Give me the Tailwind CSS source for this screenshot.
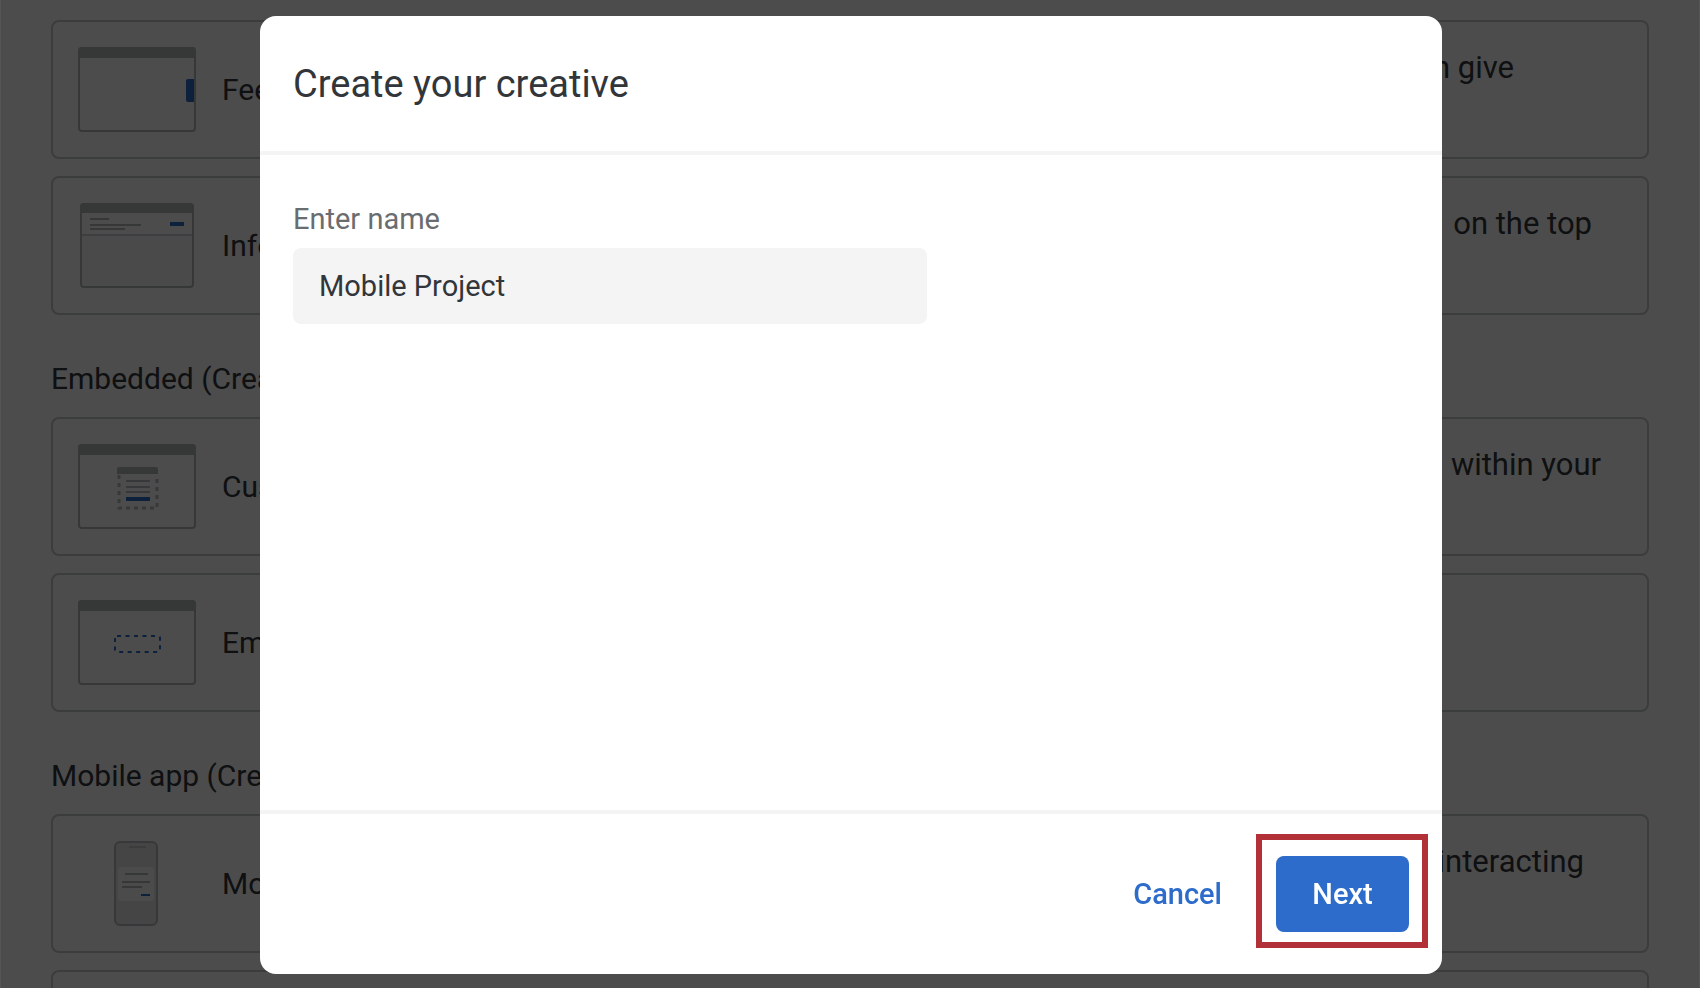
<!DOCTYPE html>
<html lang="en">
<head>
<meta charset="utf-8">
<meta name="viewport" content="width=device-width, initial-scale=1">
<title>Create your creative</title>
<script src="https://cdn.jsdelivr.net/npm/@tailwindcss/browser@4"></script>
</head>
<body class="h-screen overflow-hidden bg-white font-['Roboto',sans-serif] text-[29px] leading-[42px] text-[#32363a]">

<main class="flex h-screen flex-col gap-[43px] overflow-hidden px-[51px] pt-5" inert>
  <section class="flex shrink-0 flex-col gap-[17px]">
    <article class="flex h-[139px] items-center gap-[26px] rounded-lg border-2 border-[#c6c8ca] pl-[25px] pr-[133px]">
      <svg class="h-[85px] w-[118px] shrink-0" viewBox="0 0 118 85" fill="none">
        <rect x="1" y="1" width="116" height="83" rx="3" stroke="#b4b8ba" stroke-width="2"/>
        <path d="M0 11V4a4 4 0 0 1 4-4h110a4 4 0 0 1 4 4v7z" fill="#b4b8ba"/>
        <path d="M116 32h-6a2 2 0 0 0-2 2v19a2 2 0 0 0 2 2h6z" fill="#2d6cca"/>
      </svg>
      <h3 class="grow text-[30px]">Fee</h3>
      <p class="self-start pt-[25px] text-[31px]">can give</p>
    </article>
    <article class="flex h-[139px] items-center gap-[26px] rounded-lg border-2 border-[#c6c8ca] pl-[25px] pr-[55px]">
      <svg class="h-[85px] w-[118px] shrink-0" viewBox="0 0 118 85" fill="none">
        <rect x="3" y="1" width="112" height="83" rx="3" fill="#f7f7f7" stroke="#b4b8ba" stroke-width="2"/>
        <path d="M4 10h110v21H4z" fill="#fff"/>
        <path d="M4 32h110" stroke="#cdd0d2" stroke-width="2"/>
        <path d="M2 10V4a4 4 0 0 1 4-4h106a4 4 0 0 1 4 4v6z" fill="#b4b8ba"/>
        <path d="M12 16h19M12 22h51M12 26h35" stroke="#b4b8ba" stroke-width="2"/>
        <path d="M92 19h14v4H92z" fill="#2d6cca"/>
      </svg>
      <h3 class="grow text-[30px]">Info</h3>
      <p class="self-start pt-[25px] text-[31px]">on the top</p>
    </article>
  </section>

  <section class="flex shrink-0 flex-col gap-[17px]">
    <h2 class="text-[30px]">Embedded (Crea</h2>
    <article class="flex h-[139px] items-center gap-[26px] rounded-lg border-2 border-[#c6c8ca] pl-[25px] pr-[46px]">
      <svg class="h-[85px] w-[118px] shrink-0" viewBox="0 0 118 85" fill="none">
        <rect x="1" y="1" width="116" height="83" rx="3" stroke="#b4b8ba" stroke-width="2"/>
        <path d="M0 11V4a4 4 0 0 1 4-4h110a4 4 0 0 1 4 4v7z" fill="#b4b8ba"/>
        <rect x="40" y="25" width="40" height="40" rx="2" fill="#fff"/>
        <path d="M41 31v33h38V31" stroke="#b9bcbe" stroke-width="3" stroke-dasharray="4 4"/>
        <path d="M39 30v-5a2 2 0 0 1 2-2h37a2 2 0 0 1 2 2v5z" fill="#b4b8ba"/>
        <path d="M48 37h24M48 43h24M48 48h24" stroke="#b9bcbe" stroke-width="2"/>
        <path d="M48 53h24v4H48z" fill="#2d6cca"/>
      </svg>
      <h3 class="grow text-[30px]">Cus</h3>
      <p class="self-start pt-[25px] text-[31px]">within your</p>
    </article>
    <article class="flex h-[139px] items-center gap-[26px] rounded-lg border-2 border-[#c6c8ca] pl-[25px]">
      <svg class="h-[85px] w-[118px] shrink-0" viewBox="0 0 118 85" fill="none">
        <rect x="1" y="1" width="116" height="83" rx="3" stroke="#b4b8ba" stroke-width="2"/>
        <path d="M0 11V4a4 4 0 0 1 4-4h110a4 4 0 0 1 4 4v7z" fill="#b4b8ba"/>
        <rect x="37" y="36" width="45" height="16" rx="2" stroke="#2d6cca" stroke-width="2" stroke-dasharray="4 4.500"/>
      </svg>
      <h3 class="grow text-[30px]">Em</h3>
    </article>
  </section>

  <section class="flex shrink-0 flex-col gap-[17px]">
    <h2 class="text-[30px]">Mobile app (Cre</h2>
    <article class="flex h-[139px] items-center gap-[26px] rounded-lg border-2 border-[#c6c8ca] pl-[25px] pr-[63px]">
      <svg class="h-[85px] w-[118px] shrink-0" viewBox="0 0 118 85" fill="none">
        <rect x="37" y="1" width="42" height="83" rx="5" fill="#e6e7e8" stroke="#b9bcbe" stroke-width="2"/>
        <path d="M51 6h17" stroke="#c6c8ca" stroke-width="2"/>
        <rect x="40" y="26" width="36" height="34" rx="3" fill="#fcfcfc"/>
        <path d="M47 33h23M44 41h28M44 46h20" stroke="#b4b8ba" stroke-width="2"/>
        <path d="M63 54h9" stroke="#2d6cca" stroke-width="2"/>
      </svg>
      <h3 class="grow text-[30px]">Mo</h3>
      <p class="self-start pt-[25px] text-[31px]">interacting</p>
    </article>
    <article class="h-[139px] rounded-lg border-2 border-[#c6c8ca]"></article>
  </section>
</main>

<div class="fixed inset-0 flex border-x border-white/5 bg-black/70 pb-[14px] pl-[259px] pr-[257px] pt-4">
  <div role="dialog" aria-modal="true" aria-labelledby="dialog-title" class="flex w-full flex-col rounded-2xl bg-white">
    <header class="flex h-[139px] items-center border-b-4 border-[#f4f4f4] px-[33px]">
      <h1 id="dialog-title" class="text-[38px]">Create your creative</h1>
    </header>
    <form id="creative-form" class="flex grow flex-col gap-2 px-[33px] pt-[43px]">
      <label for="name" class="text-[#6a6d70]">Enter name</label>
      <input id="name" type="text" value="Mobile Project" class="h-[76px] w-full max-w-[634px] rounded-lg bg-[#f4f4f4] px-[26px] outline-none">
    </form>
    <footer class="flex h-[164px] items-center justify-end gap-[54px] border-t-4 border-[#f4f4f4] pr-[33px]">
      <button type="button" class="font-medium text-[#2d6cca]">Cancel</button>
      <div class="relative">
        <button type="submit" form="creative-form" class="h-[76px] w-[133px] rounded-lg bg-[#2d6cca] font-medium text-white">Next</button>
        <div class="pointer-events-none absolute -bottom-4 -left-5 -right-[19px] -top-[22px] border-6 border-[#b23139]"></div>
      </div>
    </footer>
  </div>
</div>
</body>
</html>
